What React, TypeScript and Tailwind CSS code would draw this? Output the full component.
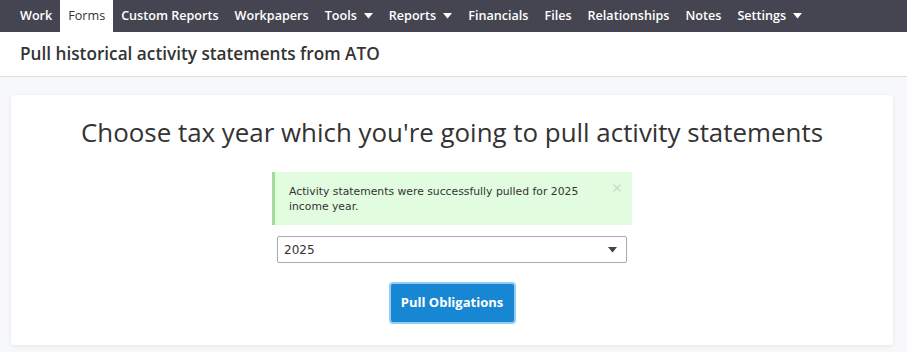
import { X } from "lucide-react";

const navItems = [
  { label: "Work" },
  { label: "Forms", active: true },
  { label: "Custom Reports" },
  { label: "Workpapers" },
  { label: "Tools", caret: true },
  { label: "Reports", caret: true },
  { label: "Financials" },
  { label: "Files" },
  { label: "Relationships" },
  { label: "Notes" },
  { label: "Settings", caret: true },
];

function Caret({ className }: { className?: string }) {
  return (
    <svg width="9" height="6" viewBox="0 0 9 6" className={className}>
      <path d="M0 0h9L4.5 5.5z" fill="currentColor" />
    </svg>
  );
}

export default function App() {
  return (
    <div className="min-h-[352px] bg-[#f7f8fa] font-['Open_Sans',sans-serif] text-[#333]">
      <nav className="flex h-8 items-stretch bg-[#454551] pl-3">
        {navItems.map((item) => (
          <a
            key={item.label}
            href="#"
            className={
              item.active
                ? "flex items-center bg-white px-2 text-[12.6px] text-[#333]"
                : "flex items-center gap-[7px] px-2 text-[12.6px] font-semibold text-white"
            }
          >
            {item.label}
            {item.caret && <Caret className="text-white" />}
          </a>
        ))}
      </nav>

      <div className="flex h-[45px] items-center border-b border-[#dedede] bg-white px-5">
        <h1 className="text-[17.2px] font-semibold text-[#333]">
          Pull historical activity statements from ATO
        </h1>
      </div>

      <div className="pl-[11px] pr-[14px] pt-[18px] pb-[7px]">
        <div className="flex flex-col items-center rounded-[4px] bg-white pt-[17px] pb-[21px] shadow-[0_1px_4px_rgba(0,0,0,0.08)]">
          <h2 className="text-[25.9px] leading-[40px] text-[#333]">
            Choose tax year which you're going to pull activity statements
          </h2>

          <div className="relative mt-[20px] w-[360px] border-l-[3px] border-[#9fdf98] bg-[#e1fcde] pt-[12px] pb-[11px] pl-[14px] pr-10 font-['DejaVu_Sans',sans-serif] text-[10.8px] leading-[15px] text-[#333]">
            Activity statements were successfully pulled for 2025 income year.
            <X className="absolute right-[9px] top-[10px] h-3 w-3 text-[#cfd9cc]" strokeWidth={3} />
          </div>

          <div className="mt-[11px] flex h-[27px] w-[350px] items-center justify-between rounded-[2px] border border-[#aaa] bg-white pl-[6px] pr-[9px] font-['DejaVu_Sans',sans-serif] text-[12px] text-[#333]">
            <span>2025</span>
            <Caret className="text-[#444]" />
          </div>

          <button className="mt-[19px] h-[42px] w-[127px] rounded-[4px] border-2 border-[#95cdf2] bg-[#1887d3] text-[13px] font-bold text-white">
            Pull Obligations
          </button>
        </div>
      </div>
    </div>
  );
}
